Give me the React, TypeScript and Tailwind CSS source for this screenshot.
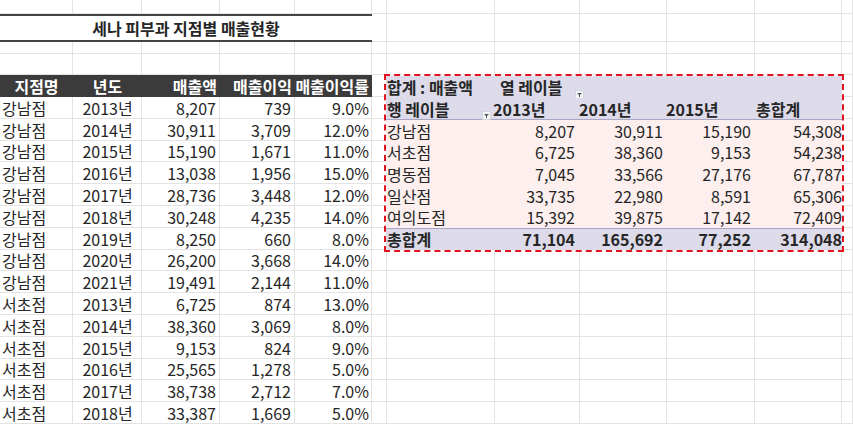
import React from "react";

const colW = [73, 69, 78, 75, 77, 15, 108, 85, 87, 88, 87, 11];
const rowH = [14, 28, 12, 21, 22, ...Array(15).fill(21.8)];

const data: [string, string, string, string, string][] = [
  ["강남점", "2013년", "8,207", "739", "9.0%"],
  ["강남점", "2014년", "30,911", "3,709", "12.0%"],
  ["강남점", "2015년", "15,190", "1,671", "11.0%"],
  ["강남점", "2016년", "13,038", "1,956", "15.0%"],
  ["강남점", "2017년", "28,736", "3,448", "12.0%"],
  ["강남점", "2018년", "30,248", "4,235", "14.0%"],
  ["강남점", "2019년", "8,250", "660", "8.0%"],
  ["강남점", "2020년", "26,200", "3,668", "14.0%"],
  ["강남점", "2021년", "19,491", "2,144", "11.0%"],
  ["서초점", "2013년", "6,725", "874", "13.0%"],
  ["서초점", "2014년", "38,360", "3,069", "8.0%"],
  ["서초점", "2015년", "9,153", "824", "9.0%"],
  ["서초점", "2016년", "25,565", "1,278", "5.0%"],
  ["서초점", "2017년", "38,738", "2,712", "7.0%"],
  ["서초점", "2018년", "33,387", "1,669", "5.0%"],
];

const pivot: [string, string, string, string, string][] = [
  ["강남점", "8,207", "30,911", "15,190", "54,308"],
  ["서초점", "6,725", "38,360", "9,153", "54,238"],
  ["명동점", "7,045", "33,566", "27,176", "67,787"],
  ["일산점", "33,735", "22,980", "8,591", "65,306"],
  ["여의도점", "15,392", "39,875", "17,142", "72,409"],
];

const Filter = () => (
  <span className="inline-flex w-[9px] h-[9px] border border-gray-300 bg-gray-100 items-center justify-center">
    <svg width="7" height="7" viewBox="0 0 7 7"><path d="M1 2h5L4 4v2H3V4z" fill="#555" /></svg>
  </span>
);

const at = (r: number, c: number, rs = 1, cs = 1) => ({
  gridRow: `${r + 1} / span ${rs}`,
  gridColumn: `${c + 1} / span ${cs}`,
});

export default function App() {
  const bg: React.ReactNode[] = [];
  rowH.forEach((_, r) =>
    colW.forEach((_, c) =>
      bg.push(<div key={`${r}-${c}`} style={at(r, c)} className="border-r border-b border-[#e3e3e3]" />)
    )
  );
  const align = ["justify-start pl-[2px]", "justify-center", "justify-end pr-[4px]", "justify-end pr-[4px]", "justify-end pr-[3px]"];
  return (
    <div
      className="w-[853px] h-[424px] overflow-hidden bg-white text-base text-neutral-800"
      style={{ fontFamily: '"Noto Sans CJK KR", "Noto Sans", sans-serif' }}
    >
      <div
        className="grid"
        style={{ gridTemplateColumns: colW.map((w) => w + "px").join(" "), gridTemplateRows: rowH.map((h) => h + "px").join(" ") }}
      >
        {bg}
        <div style={at(1, 0, 1, 5)} className="bg-white border-t-2 border-b-2 border-[#444] flex items-center justify-center font-bold text-base">
          세나 피부과 지점별 매출현황
        </div>
        {["지점명", "년도", "매출액", "매출이익", "매출이익률"].map((h, c) => (
          <div key={h} style={at(4, c)} className={`bg-[#3b3b3b] text-white font-bold flex items-center leading-none ${c < 2 ? "justify-center" : "justify-end pr-[3px]"}`}>
            {h}
          </div>
        ))}
        {data.map((row, r) =>
          row.map((v, c) => (
            <div key={`d${r}${c}`} style={at(5 + r, c)} className={`flex items-center leading-none ${align[c]}`}>
              {v}
            </div>
          ))
        )}
        <div style={at(4, 6, 8, 5)} className="relative z-10 flex flex-col border-2 border-dashed border-[#e0141e] -ml-[3px] -mr-[2px] -mt-[1px] -mb-[2px] overflow-hidden">
          <div className="flex h-[22px] bg-[#dddbea] font-bold items-center leading-none">
            <div className="w-[106px] pl-[1px] whitespace-nowrap">합계 : 매출액</div>
            <div className="flex-1 flex items-center gap-[12px] pl-[8px]">열 레이블<span className="mt-[8px]"><Filter /></span></div>
          </div>
          <div className="flex h-[22px] bg-[#dddbea] font-bold items-center leading-none border-b border-[#a8a6c4]">
            <div className="w-[106px] pl-[1px] flex items-center justify-between pr-[1px]">행 레이블<span className="mt-[6px]"><Filter /></span></div>
            <div className="w-[85px] pl-[1px]">2013년</div>
            <div className="w-[87px] pl-[2px]">2014년</div>
            <div className="w-[88px] pl-[2px]">2015년</div>
            <div className="flex-1 pl-[4px]">총합계</div>
          </div>
          <div className="bg-[#fcefee] flex flex-col">
            {pivot.map((row) => (
              <div key={row[0]} className="flex h-[21.6px] items-center leading-none">
                <div className="w-[106px] pl-[1px]">{row[0]}</div>
                <div className="w-[85px] text-right pr-[2px]">{row[1]}</div>
                <div className="w-[87px] text-right pr-[1px]">{row[2]}</div>
                <div className="w-[88px] text-right pr-[1px]">{row[3]}</div>
                <div className="flex-1 text-right">{row[4]}</div>
              </div>
            ))}
          </div>
          <div className="flex flex-1 bg-[#dddbea] font-bold items-center leading-none border-t border-[#a8a6c4]">
            <div className="w-[106px] pl-[1px]">총합계</div>
            <div className="w-[85px] text-right pr-[2px]">71,104</div>
            <div className="w-[87px] text-right pr-[1px]">165,692</div>
            <div className="w-[88px] text-right pr-[1px]">77,252</div>
            <div className="flex-1 text-right">314,048</div>
          </div>
        </div>
      </div>
    </div>
  );
}
